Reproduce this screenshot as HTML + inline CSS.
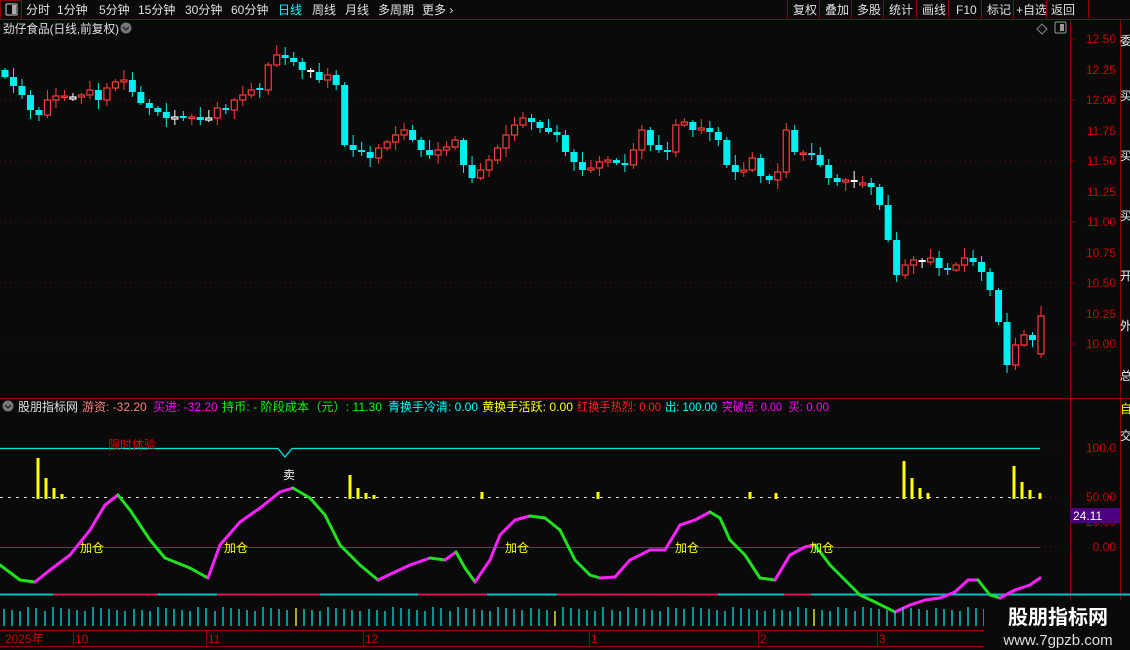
<!DOCTYPE html>
<html><head><meta charset="utf-8"><style>
body{margin:0;background:#0a0a0a;width:1130px;height:650px;overflow:hidden;font-family:"Liberation Sans","Noto Sans CJK SC",sans-serif;}
svg{position:absolute;left:0;top:0}
</style></head><body>
<svg id="s" width="1130" height="650" xmlns="http://www.w3.org/2000/svg" font-family="Liberation Sans, Noto Sans CJK SC, sans-serif">
<rect width="1130" height="650" fill="#0a0a0a"/>
<line x1="0" y1="19.5" x2="1130" y2="19.5" stroke="#8b0000"/>
<rect x="0.5" y="0.5" width="21" height="19" fill="none" stroke="#8b0000"/>
<rect x="6" y="4" width="11" height="11" fill="none" stroke="#aaa" stroke-width="1.2" rx="1"/><rect x="12" y="5" width="4" height="9" fill="#aaa"/>
<g font-size="12" fill="#e0e0e0">
<text x="26" y="14">分时</text><text x="57" y="14">1分钟</text><text x="99" y="14">5分钟</text><text x="138" y="14">15分钟</text><text x="185" y="14">30分钟</text><text x="231" y="14">60分钟</text>
<text x="278" y="14" fill="#00ffff">日线</text><text x="312" y="14">周线</text><text x="345" y="14">月线</text><text x="378" y="14">多周期</text><text x="422" y="14">更多 ›</text>
<text x="793" y="14">复权</text><text x="825" y="14">叠加</text><text x="857" y="14">多股</text><text x="889" y="14">统计</text><text x="922" y="14">画线</text><text x="956" y="14">F10</text><text x="987" y="14">标记</text><text x="1016" y="14">+自选</text><text x="1051" y="14">返回</text>
</g>
<g stroke="#8b0000"><line x1="787.5" y1="0" x2="787.5" y2="19"/><line x1="819.5" y1="0" x2="819.5" y2="19"/><line x1="851.5" y1="0" x2="851.5" y2="19"/><line x1="883.5" y1="0" x2="883.5" y2="19"/><line x1="916.5" y1="0" x2="916.5" y2="19"/><line x1="948.5" y1="0" x2="948.5" y2="19"/><line x1="981.5" y1="0" x2="981.5" y2="19"/><line x1="1013.5" y1="0" x2="1013.5" y2="19"/><line x1="1046.5" y1="0" x2="1046.5" y2="19"/><line x1="1088.5" y1="0" x2="1088.5" y2="19"/></g>
<text x="3" y="33" font-size="12" fill="#e0e0e0" textLength="116" lengthAdjust="spacingAndGlyphs">劲仔食品(日线,前复权)</text>
<circle cx="126" cy="28" r="5.5" fill="#777"/><path d="M123 27l3 3 3-3" stroke="#222" fill="none" stroke-width="1.3"/>
<path d="M1042 24l5 5-5 5-5-5z" fill="none" stroke="#888"/>
<rect x="1055" y="22" width="11" height="11" fill="none" stroke="#999" rx="1.5"/><rect x="1060" y="24" width="4" height="7" fill="#999"/>
<line x1="1070.5" y1="20" x2="1070.5" y2="646" stroke="#8b0000"/>
<line x1="1120.5" y1="20" x2="1120.5" y2="646" stroke="#8b0000"/>
<line x1="0" y1="398.5" x2="1130" y2="398.5" stroke="#8b0000"/>
<g font-size="12" fill="#d00000" text-anchor="end">
<text x="1116" y="43">12.50</text><text x="1116" y="74">12.25</text><text x="1116" y="104">12.00</text><text x="1116" y="135">11.75</text><text x="1116" y="165">11.50</text><text x="1116" y="196">11.25</text><text x="1116" y="226">11.00</text><text x="1116" y="257">10.75</text><text x="1116" y="287">10.50</text><text x="1116" y="318">10.25</text><text x="1116" y="348">10.00</text>
<text x="1116" y="452">100.0</text><text x="1116" y="501">50.00</text><text x="1116" y="526">25.00</text><text x="1116" y="551">0.00</text>
</g>
<g stroke="#8b0000"><line x1="1070" y1="39" x2="1075" y2="39"/><line x1="1070" y1="100" x2="1075" y2="100"/><line x1="1070" y1="161" x2="1075" y2="161"/><line x1="1070" y1="222" x2="1075" y2="222"/><line x1="1070" y1="283" x2="1075" y2="283"/><line x1="1070" y1="344" x2="1075" y2="344"/></g>
<g stroke="#5a1010" stroke-dasharray="1 4"><line x1="0" y1="100" x2="1070" y2="100"/><line x1="0" y1="161" x2="1070" y2="161"/><line x1="0" y1="222" x2="1070" y2="222"/><line x1="0" y1="283" x2="1070" y2="283"/><line x1="0" y1="344" x2="1070" y2="344"/></g>
<rect x="1070" y="508" width="50" height="15" fill="#4b0082"/><text x="1073" y="520" font-size="12" fill="#fff">24.11</text>
<g fill="#eee" font-size="12"><text x="1120" y="45">委</text><text x="1120" y="100">买</text><text x="1120" y="160">买</text><text x="1120" y="220">买</text><text x="1120" y="280">开</text><text x="1120" y="330">外</text><text x="1120" y="380">总</text><text x="1120" y="413" fill="#ff0">自</text><text x="1120" y="440">交</text></g>
<g id="candles"></g>
<circle cx="8" cy="406" r="5.5" fill="#777"/><path d="M5 405l3 3 3-3" stroke="#222" fill="none" stroke-width="1.3"/>
<g font-size="12"><text x="18" y="411" fill="#e0e0e0">股朋指标网</text><text x="82" y="411" fill="#ff7f7f">游资: -32.20</text><text x="153" y="411" fill="#ff00ff">买进: -32.20</text><text x="222" y="411" fill="#00ff00" textLength="160" lengthAdjust="spacingAndGlyphs">持币: - 阶段成本（元）: 11.30</text><text x="388" y="411" fill="#00ffff" textLength="90" lengthAdjust="spacingAndGlyphs">青换手冷清: 0.00</text><text x="482" y="411" fill="#ffff00" textLength="91" lengthAdjust="spacingAndGlyphs">黄换手活跃: 0.00</text><text x="577" y="411" fill="#ff2020" textLength="84" lengthAdjust="spacingAndGlyphs">红换手热烈: 0.00</text><text x="665" y="411" fill="#00ffff" textLength="52" lengthAdjust="spacingAndGlyphs">出: 100.00</text><text x="722" y="411" fill="#ff00ff" textLength="60" lengthAdjust="spacingAndGlyphs">突破点: 0.00</text><text x="788" y="411" fill="#ff00ff" textLength="41" lengthAdjust="spacingAndGlyphs">买: 0.00</text></g>
<path d="M0 448.5H278L285 457L292 448.5H1040" stroke="#00e5e5" fill="none" stroke-width="1.3"/>
<text x="108" y="449" font-size="12" fill="#e00000">限时体验</text>
<line x1="0" y1="547.5" x2="1040" y2="547.5" stroke="#c0105a"/>
<line x1="0" y1="497.5" x2="1040" y2="497.5" stroke="#ddd" stroke-dasharray="3 5"/>
<g stroke="#5a1010" stroke-dasharray="1 4"><line x1="1040" y1="448" x2="1070" y2="448"/><line x1="1040" y1="497" x2="1070" y2="497"/><line x1="1040" y1="547" x2="1070" y2="547"/></g>
<line x1="0" y1="594.5" x2="1130" y2="594.5" stroke="#00c0c0" stroke-width="2"/>
<g stroke="#e0105a" stroke-width="2"><line x1="53" y1="594.5" x2="157" y2="594.5"/><line x1="217" y1="594.5" x2="320" y2="594.5"/><line x1="418" y1="594.5" x2="487" y2="594.5"/><line x1="557" y1="594.5" x2="718" y2="594.5"/><line x1="784" y1="594.5" x2="811" y2="594.5"/></g>
<g id="yb" fill="#ffff00"></g>
<g id="osc" fill="none" stroke-width="3" stroke-linecap="round"></g>
<g font-size="12"><text x="283" y="479" fill="#fff">卖</text><text x="80" y="552" fill="#ffff00">加仓</text><text x="224" y="552" fill="#ffff00">加仓</text><text x="505" y="552" fill="#ffff00">加仓</text><text x="675" y="552" fill="#ffff00">加仓</text><text x="810" y="552" fill="#ffff00">加仓</text></g>
<g id="ticks" stroke-width="1.3"></g>
<line x1="0" y1="630.5" x2="1070" y2="630.5" stroke="#8b0000"/><line x1="0" y1="646.5" x2="1130" y2="646.5" stroke="#8b0000"/>
<g stroke="#8b0000"><line x1="73.5" y1="630" x2="73.5" y2="646"/><line x1="206.5" y1="630" x2="206.5" y2="646"/><line x1="363.5" y1="630" x2="363.5" y2="646"/><line x1="589.5" y1="630" x2="589.5" y2="646"/><line x1="758.5" y1="630" x2="758.5" y2="646"/><line x1="877.5" y1="630" x2="877.5" y2="646"/></g>
<g font-size="12" fill="#d00000"><text x="5" y="643">2025年</text><text x="75" y="643">10</text><text x="208" y="643">11</text><text x="365" y="643">12</text><text x="591" y="643">1</text><text x="760" y="643">2</text><text x="879" y="643">3</text></g>
<rect x="984" y="600" width="146" height="50" fill="#0a0a0a"/>
<text x="1058" y="624" font-size="20" font-weight="bold" fill="#fff" text-anchor="middle">股朋指标网</text>
<text x="1058" y="645" font-size="15" fill="#ddd" text-anchor="middle">www.7gpzb.com</text>
</svg>
<script>
(function(){
var NS="http://www.w3.org/2000/svg";
function el(p,t,a){var e=document.createElementNS(NS,t);for(var k in a)e.setAttribute(k,a[k]);p.appendChild(e);return e;}
var c=[77,86,95,110,115,100,96,96,97,95,90,100,88,82,80,92,103,108,112,118,117,118,117,120,118,108,110,100,95,90,90,65,55,58,62,70,72,80,75,85,145,150,152,158,148,142,135,130,140,150,155,150,147,140,165,178,170,160,148,135,125,118,122,128,132,135,152,162,170,168,162,160,163,165,150,130,145,150,152,125,122,130,128,132,140,165,172,170,158,176,180,172,130,152,153,155,165,178,182,180,182,183,187,205,240,275,265,260,262,258,268,270,265,258,262,272,290,322,365,345,335,340,316];
var g=document.getElementById('candles');var n=c.length,dx=(1041-5)/(n-1);
for(var i=0;i<n;i++){var x=5+i*dx,cl=c[i],op=i?c[i-1]:70;
 if(i==n-1){op=354;}
 if(Math.abs(op-cl)<2){op=cl+((i%3)-1)*2;}
 var up=cl<=op,col=up?'#ff3a3a':'#00f0f0',tp=Math.min(op,cl),bt=Math.max(op,cl),h=Math.max(bt-tp,1.5);
 var w1=2+(i*7%9),w2=2+(i*5%8);
 if(Math.abs(op-cl)<=2&&i%4==0)col='#fff';
 el(g,'line',{x1:x,y1:tp-w1,x2:x,y2:bt+w2,stroke:col,'stroke-width':1});
 if(up)el(g,'rect',{x:x-3,y:tp,width:6,height:h,fill:'#0a0a0a',stroke:col,'stroke-width':1.2});
 else el(g,'rect',{x:x-3.5,y:tp,width:7,height:h,fill:col});}
var yb=document.getElementById('yb');
[[38,458],[46,478],[54,488],[62,494],[350,475],[358,488],[366,493],[374,495],[482,492],[598,492],[750,492],[776,493],[904,461],[912,478],[920,488],[928,493],[1014,466],[1022,482],[1030,490],[1040,493]].forEach(function(b){el(yb,'rect',{x:b[0]-1.5,y:b[1],width:3,height:499-b[1]});});
var p=[[0,565],[20,580],[35,582],[50,570],[70,555],[90,530],[105,505],[118,495],[130,510],[150,540],[165,558],[190,568],[208,578],[220,545],[240,522],[260,508],[280,492],[293,488],[310,498],[325,515],[340,545],[360,565],[378,580],[395,572],[410,565],[430,558],[445,560],[456,552],[465,568],[475,582],[490,560],[500,535],[515,520],[530,516],[545,518],[560,530],[575,560],[590,575],[600,578],[615,577],[630,560],[650,550],[665,550],[680,525],[695,520],[710,512],[720,518],[730,540],[745,555],[760,578],[775,580],[790,555],[805,547],[815,545],[830,565],[845,580],[860,595],[875,602],[895,612],[910,605],[925,600],[940,598],[955,592],[968,580],[978,580],[990,595],[1000,598],[1015,590],[1030,585],[1040,578]];
var o=document.getElementById('osc');
for(var i=1;i<p.length;i++){var a=p[i-1],b=p[i];el(o,'line',{x1:a[0],y1:a[1],x2:b[0],y2:b[1],stroke:b[1]>a[1]?'#20e020':'#ff20ff'});}
var t=document.getElementById('ticks');
for(var x=4;x<985;x+=8.1){var k=Math.round(x);var yl=(k%37==0)?'#ffff40':'#00e0e0';el(t,'line',{x1:k,y1:611-(k*13%5),x2:k,y2:626,stroke:yl});}
})();
</script>
</body></html>
